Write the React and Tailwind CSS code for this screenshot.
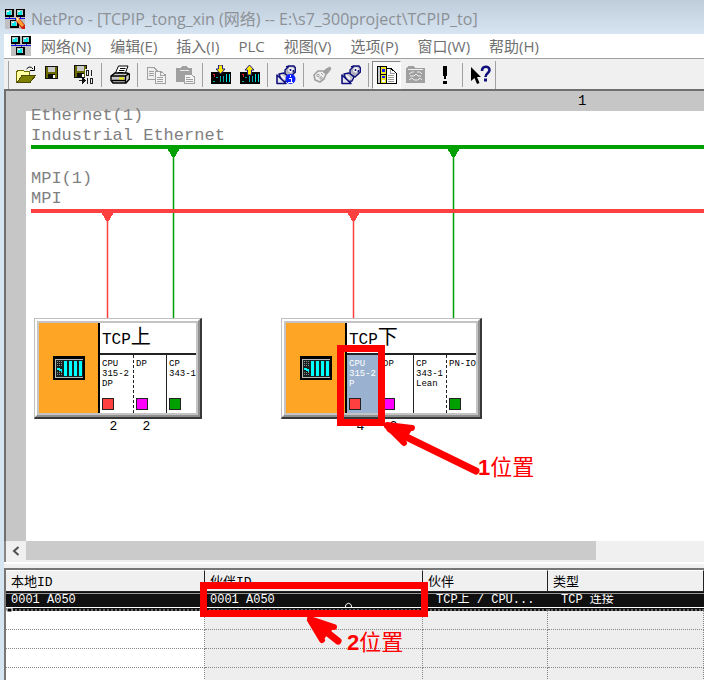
import React from 'react';
import clsx from 'clsx';

const MENUS = ['网络(N)', '编辑(E)', '插入(I)', 'PLC', '视图(V)', '选项(P)', '窗口(W)', '帮助(H)'];

const STATIONS = [
  {
    id: 'upper',
    name: 'TCP上',
    place: 'left-[28px] top-[227px]',
    slots: [
      { lines: ['CPU', '315-2', 'DP'], port: 'bg-[#ff4040]', address: '2' },
      { lines: ['DP'], port: 'bg-[#ff00ff]', dashed: true, address: '2' },
      { lines: ['CP', '343-1'], port: 'bg-[#00a000]' },
    ],
  },
  {
    id: 'lower',
    name: 'TCP下',
    place: 'left-[275px] top-[227px]',
    slots: [
      { lines: ['CPU', '315-2', 'P'], port: 'bg-[#ff4040]', address: '4', selected: true },
      { lines: ['DP'], port: 'bg-[#ff00ff]', dashed: true, address: '2' },
      { lines: ['CP', '343-1', 'Lean'] },
      { lines: ['PN-IO'], port: 'bg-[#00a000]', dashed: true },
    ],
  },
];

const Icon = ({ children, className = 'w-5 h-5' }) => (
  <svg viewBox="0 0 20 20" className={className} shapeRendering="crispEdges" aria-hidden="true">
    {children}
  </svg>
);

const Monitor = ({ x, y }) => (
  <g>
    <rect x={x} y={y} width="9" height="8" fill="#000" />
    <rect x={x + 1} y={y + 1} width="6" height="5" fill="#a8c8c8" />
    <rect x={x + 2} y={y + 2} width="4" height="4" fill="#00e5e5" />
    <rect x={x + 2} y={y + 2} width="2" height="1" fill="#fff" />
  </g>
);

const NetIcon = ({ pencil }) => (
  <Icon className="w-5 h-5 shrink-0">
    <rect width="20" height="20" fill="#c0c0c0" />
    <path d="M0 9.5H20M4.5 8V10M15.5 8V10M10 9V12" stroke="#1010e0" strokeWidth="1" fill="none" />
    <Monitor x={0} y={0} />
    <Monitor x={11} y={0} />
    <Monitor x={5} y={11} />
    {pencil && (
      <g shapeRendering="auto">
        <path d="M11 8L14 9L20 16V20H17L11 12Z" fill="#d02010" />
        <path d="M11 8L14 9.5L19 16L17 18L11.5 12Z" fill="#ffa030" />
        <path d="M11 8L14 9.5L12 12Z" fill="#fff3c0" />
      </g>
    )}
  </Icon>
);

const OpenIcon = () => (
  <Icon>
    <path d="M0.5 17.5V6.5L2.5 5.5H7.5L8.5 6.5H13.5V10" fill="#ffffa0" stroke="#6b6b00" />
    <path d="M1 17.5L6 10.5H19.5L14 17.5Z" fill="#808000" stroke="#4a4a00" />
    <path d="M10.5 4Q14 0 17 4M18.5 1V5.5H14" fill="none" stroke="#000" shapeRendering="auto" />
  </Icon>
);

const Disk = () => (
  <g>
    <rect x="0" y="0" width="13" height="13" fill="#111" />
    <rect x="1" y="1" width="11" height="11" fill="#6b6b00" />
    <rect x="3" y="1" width="7" height="5" fill="#c9c9c9" />
    <rect x="3" y="8" width="7" height="5" fill="#111" />
    <rect x="8" y="9" width="2" height="3" fill="#fff" />
  </g>
);

const SaveIcon = () => (
  <Icon>
    <g transform="translate(0 1)"><Disk /></g>
  </Icon>
);

const CompileIcon = () => (
  <Icon>
    <Disk />
    <rect x="11" y="4" width="9" height="9" fill="#f0f0f0" />
    <path d="M12.5 5.5H14.5V10.5H12.5ZM16.5 13.5H18.5V18.5H16.5Z" fill="none" stroke="#222" />
    <path d="M17.5 5V11M13.5 13V19M5 15.5H11" stroke="#222" fill="none" />
    <path d="M8 12L12 15.5L8 19Z" fill="#111" />
  </Icon>
);

const PrintIcon = () => (
  <Icon>
    <g shapeRendering="auto">
      <path d="M5 9L8.5 1H18L15 9Z" fill="#fff" stroke="#000" />
      <path d="M10 3.5H15.5M9 5.5H14.5M8 7.5H13.5" stroke="#000" />
      <path d="M1 11L5 8H17L19.5 9V14L16 18H3L1 15.5Z" fill="#c8c8c8" stroke="#000" strokeWidth="1.4" />
      <path d="M1 11H15.5L19 8.5M15.5 11V18M2 15.5H15.5" stroke="#000" strokeWidth="1.3" fill="none" />
      <rect x="9" y="12.5" width="5" height="2" fill="#e8e800" />
    </g>
  </Icon>
);

const CopyIcon = () => (
  <Icon>
    <path d="M1.5 2.5H8L11.5 6V14.5H1.5Z" fill="#eee" stroke="#a0a0a0" />
    <path d="M3 6.5H8M3 8.5H8M3 10.5H8" stroke="#a0a0a0" />
    <path d="M9.5 6.5H15L19.5 10V18.5H9.5Z" fill="#f4f4f4" stroke="#a0a0a0" />
    <path d="M14.5 6V10.5H19M11 12.5H17M11 14.5H17M11 16.5H17" stroke="#a0a0a0" fill="none" />
  </Icon>
);

const PasteIcon = () => (
  <Icon>
    <path d="M1 3H6L7 1H12L13 3H17V17H1Z" fill="#a0a0a0" />
    <path d="M5 5.5H14" stroke="#e8e8e8" />
    <path d="M9.5 9.5H16L19.5 12V18.5H9.5Z" fill="#f4f4f4" stroke="#a0a0a0" />
    <path d="M11 12.5H15M11 14.5H18M11 16.5H18" stroke="#a0a0a0" />
  </Icon>
);

const ModuleIcon = ({ up }) => (
  <Icon>
    <rect x="0" y="7" width="20" height="12" fill="#000" />
    <path d="M2 9.5H4M3.5 10V12" stroke="#d02020" fill="none" />
    <path d="M5 12.5H7M2 16.5H4" stroke="#00a0a0" />
    <path d="M9.5 11V17M12.5 11V17" stroke="#00a8a8" />
    <path d="M15.5 9V17M18.5 9V17" stroke="#00e0e0" />
    {up ? (
      <path d="M9.5 0L14 5H11.5V10H7.5V5H5Z" fill="#ffe800" stroke="#202080" shapeRendering="auto" />
    ) : (
      <path d="M7.5 0H11.5V4H14L9.5 9L5 4H7.5Z" fill="#ffe800" stroke="#202080" shapeRendering="auto" />
    )}
  </Icon>
);

const PlugShape = () => (
  <g shapeRendering="auto" stroke="#10107c" strokeLinejoin="round">
    <path d="M9 5L13 1H18L19.5 3V7L14 12L9 9Z" fill="#b0b0bc" strokeWidth="1.4" />
    <path d="M13 2.5H16.5L18 4L15 8L12 6Z" fill="#f4f4f8" stroke="none" />
    <path d="M14.5 4V6M17.5 5V7.5M10 2L13 1" strokeWidth="1.6" />
    <path d="M3 9L8 8L13 12L11 16L6 17Z" fill="#c4c4cc" strokeWidth="1.4" />
    <path d="M5 10L9 14" stroke="#fff" strokeWidth="1.6" />
    <path d="M1 10V18.5H10L1 10Z" fill="#e4e4ec" strokeWidth="1.6" />
  </g>
);

const PlugIcon = () => (
  <Icon><PlugShape /></Icon>
);

const PlugInfoIcon = () => (
  <Icon>
    <PlugShape />
    <circle cx="14.5" cy="14" r="5" fill="#0a1eff" shapeRendering="auto" />
    <path d="M14 10V12M13 13.5H15V17M12 17.5H17" stroke="#fff" strokeWidth="1" fill="none" />
  </Icon>
);

const CutPlugIcon = () => (
  <Icon>
    <g shapeRendering="auto" stroke="#a0a0a0" fill="#eee">
      <path d="M2 10L6 6H12L14 9L12 14L8 17L3 15Z" strokeWidth="1.6" />
      <path d="M11 7L14 4L18 2L19 4L15 9Z" fill="#a0a0a0" />
      <circle cx="6" cy="10.5" r="1.2" />
      <circle cx="9" cy="13" r="1.2" />
      <path d="M9 8L11 10" />
    </g>
  </Icon>
);

const CatalogIcon = () => (
  <Icon>
    <path d="M8.5 3.5H14L19 8V18.5H8.5Z" fill="#fff" stroke="#000" />
    <path d="M13.5 4V8.5H18M11 10.5H17M11 12.5H17M11 14.5H17M11 16.5H17" stroke="#999" fill="none" />
    <rect x="0.5" y="1.5" width="9" height="17" fill="#c8c8c8" stroke="#000" />
    <rect x="3.5" y="1.5" width="6" height="17" fill="#f0e428" stroke="#000" />
    <rect x="5" y="4" width="3" height="3" fill="#1a1aff" />
    <path d="M4 9.5H9" stroke="#000" />
    <rect x="5" y="11" width="3" height="2" fill="#1a1aff" />
    <rect x="5" y="15" width="3" height="2" fill="#fff" />
  </Icon>
);

const FolderNetIcon = () => (
  <Icon>
    <path d="M0 18V3L2 1H7L9 3H19V18Z" fill="#a0a0a0" />
    <path d="M2 4.5H17" stroke="#eee" />
    <path d="M3 9L6 7H8M11 7H14L16 9M4 11H8L10 9L12 11H15M3 15L6 13L8 15H12L14 13L16 15" stroke="#eee" fill="none" shapeRendering="auto" />
  </Icon>
);

const ExclaimIcon = () => (
  <Icon>
    <path d="M8 1H12V8L11 14H9L8 8Z" fill="#000" />
    <rect x="8" y="16" width="4" height="3" fill="#000" />
  </Icon>
);

const HelpIcon = () => (
  <Icon>
    <g shapeRendering="auto">
      <path d="M0 2V16L3.5 13L6 19L8.5 18L6 12H10Z" fill="#000" />
      <path d="M11 6C11 0.5 18.5 0.5 18.5 5C18.5 8.5 14.5 8 14.5 12" stroke="#10107c" strokeWidth="2.6" fill="none" />
      <rect x="13" y="13.5" width="3" height="3" fill="#10107c" />
    </g>
  </Icon>
);

const TOOL_GROUPS = [
  [
    { label: '打开', icon: <OpenIcon /> },
    { label: '保存', icon: <SaveIcon /> },
    { label: '保存并编译', icon: <CompileIcon /> },
  ],
  [{ label: '打印', icon: <PrintIcon /> }],
  [
    { label: '复制', icon: <CopyIcon />, disabled: true },
    { label: '粘贴', icon: <PasteIcon />, disabled: true },
  ],
  [
    { label: '下载', icon: <ModuleIcon /> },
    { label: '上传', icon: <ModuleIcon up /> },
  ],
  [{ label: '连接信息', icon: <PlugInfoIcon /> }],
  [
    { label: '断开连接', icon: <CutPlugIcon />, disabled: true },
    { label: '连接', icon: <PlugIcon /> },
  ],
  [
    { label: '目录', icon: <CatalogIcon />, pressed: true },
    { label: '项目', icon: <FolderNetIcon />, disabled: true },
    { label: '一致性检查', icon: <ExclaimIcon /> },
  ],
  [{ label: '帮助', icon: <HelpIcon /> }],
];

const Toolbar = () => (
  <div className="flex h-[31px] items-center border-t border-[#a0a0a0] bg-[#f0f0f0] pt-px pl-1">
    <span className="mr-0.5 h-7 w-px bg-[#a0a0a0]" />
    {TOOL_GROUPS.map((group, i) => (
      <div key={i} className="flex items-center">
        {i > 0 && <span className="mx-[3px] h-6 w-px bg-[#a0a0a0]" />}
        {group.map((tool) => (
          <button
            key={tool.label}
            type="button"
            aria-label={tool.label}
            disabled={tool.disabled}
            className={clsx(
              'flex h-7 w-[29px] items-center justify-center',
              tool.pressed && 'border border-t-[#888] border-l-[#888] border-r-white border-b-white bg-[#f8f8f8]'
            )}
          >
            {tool.icon}
          </button>
        ))}
      </div>
    ))}
    <span className="h-7 w-px bg-[#a0a0a0]" />
  </div>
);

const RackIcon = () => (
  <svg viewBox="0 0 32 24" className="h-6 w-8" shapeRendering="crispEdges" aria-hidden="true">
    <rect width="32" height="24" fill="#000" />
    <rect x="2" y="3" width="28" height="19" fill="#b8b8b8" />
    <rect x="3" y="4" width="27" height="17" fill="#182020" />
    <path d="M4 5.5H10M4 7.5H10M4 9.5H10M4 16.5H10M4 18.5H10" stroke="#8c9090" strokeDasharray="1 1" />
    <path d="M4 13H6L9 15" stroke="#00ffff" strokeWidth="2" fill="none" />
    <path d="M12.5 5V20M17.5 5V20M22.5 5V20M27.5 5V20" stroke="#00ffff" strokeWidth="3" />
  </svg>
);

const Station = ({ station }) => (
  <div className={clsx('absolute', station.place)}>
    <div className="border-t border-l border-r-2 border-b-2 border-t-[#c0c0c0] border-l-[#c0c0c0] border-r-[#383838] border-b-[#383838]">
      <div className="border-2 border-t-white border-l-white border-r-[#909090] border-b-[#909090]">
        <div className="flex h-[94px] border-2 border-[#c4c4c4] bg-white">
          <div className="flex w-[59px] items-center justify-center bg-[#ffa526]">
            <RackIcon />
          </div>
          <div className="flex flex-col border-l-2 border-black">
            <div className="flex h-[30px] items-baseline pt-1 pl-0.5 text-base leading-6 text-black">
              {station.name.slice(0, 3)}
              <span className="text-xl leading-6">{station.name.slice(3)}</span>
            </div>
            <div className="flex flex-1 border-t-2 border-[#222]">
              {station.slots.map((slot, i) => (
                <div
                  key={i}
                  className={clsx(
                    'flex w-[33px] flex-col justify-between pt-1 pb-[3px] pl-0.5 text-[9px] leading-[10px] last:w-[30px]',
                    i > 0 && 'border-l border-[#222]',
                    slot.dashed && 'border-dashed',
                    slot.selected ? 'bg-[#9ab2d0] text-white' : 'text-black'
                  )}
                >
                  <div>
                    {slot.lines.map((line) => (
                      <div key={line}>{line}</div>
                    ))}
                  </div>
                  {slot.port && <span className={clsx('h-3 w-3 border border-[#222]', slot.port)} />}
                </div>
              ))}
            </div>
          </div>
        </div>
      </div>
    </div>
    <div className="flex pl-[63px] text-[13px] leading-4 text-black">
      {station.slots.map((slot, i) => (
        <span key={i} className="w-[33px] text-center last:w-[30px]">{slot.address}</span>
      ))}
    </div>
  </div>
);

const BusLines = () => (
  <svg className="absolute inset-0 h-full w-full" shapeRendering="crispEdges" aria-hidden="true">
    <g fill="#00a000">
      <rect x="166" y="57" width="3" height="170" opacity="0.25" />
      <rect x="446" y="57" width="3" height="170" opacity="0.25" />
      <rect x="167" y="57" width="1" height="170" />
      <rect x="447" y="57" width="1" height="170" />
      <rect x="25" y="54" width="100%" height="4" />
      <path d="M161 57H174L167.5 68ZM441 57H454L447.5 68Z" />
    </g>
    <g fill="#ff4040">
      <rect x="100" y="121" width="3" height="106" opacity="0.25" />
      <rect x="346" y="121" width="3" height="106" opacity="0.25" />
      <rect x="101" y="121" width="1" height="106" />
      <rect x="347" y="121" width="1" height="106" />
      <rect x="25" y="118" width="100%" height="4" />
      <path d="M95 121H108L101.5 132ZM341 121H354L347.5 132Z" />
    </g>
  </svg>
);

const NetworkView = () => (
  <main className="relative flex flex-1 flex-col overflow-hidden border-t-2 border-l-2 border-[#707070] bg-[#c6c6c6] pl-5 font-['Liberation_Mono','Noto_Sans_CJK_SC',monospace]">
    <div className="h-5 pl-[552px] text-sm leading-5 text-black">1</div>
    <div className="flex-1 bg-white" />
    <BusLines />
    <div className="absolute top-[15px] left-[25px] text-[17px] leading-5 text-[#808080]">
      <div>Ethernet(1)</div>
      <div>Industrial Ethernet</div>
    </div>
    <div className="absolute top-[78px] left-[25px] text-[17px] leading-5 text-[#808080]">
      <div>MPI(1)</div>
      <div>MPI</div>
    </div>
    {STATIONS.map((station) => (
      <Station key={station.id} station={station} />
    ))}
    {/* 位置 1 标注 */}
    <svg className="absolute inset-0 h-full w-full" aria-hidden="true">
      <rect x="334.5" y="257.5" width="41" height="74" fill="none" stroke="#f00" strokeWidth="7" />
      <path d="M470 380L384 338" stroke="#f00" strokeWidth="7" strokeLinecap="round" />
      <path d="M379 332L407 337L398 352Z" fill="#f00" />
      <path d="M381 334L406 337M381 335L398 352" stroke="#f00" strokeWidth="6" strokeLinecap="round" />
    </svg>
    <span className="absolute top-[365px] left-[472px] font-['Liberation_Sans','Noto_Sans_CJK_SC',sans-serif] text-[22px] leading-6 text-[#f00]">
      <b>1</b>位置
    </span>
  </main>
);

const ScrollBar = () => (
  <div className="flex h-[21px] items-stretch border-l-2 border-[#888] bg-[#f0f0f0] pb-0.5">
    <button type="button" aria-label="向左滚动" className="flex w-5 items-center justify-center">
      <svg viewBox="0 0 10 10" className="h-2.5 w-2.5" aria-hidden="true">
        <path d="M7.5 1L3 5L7.5 9" fill="none" stroke="#505050" strokeWidth="2" />
      </svg>
    </button>
    <div className="flex-1">
      <div className="h-full w-[84%] bg-[#cbcbcb]" />
    </div>
  </div>
);

const HEADERS = ['本地ID', '伙伴ID', '伙伴', '类型'];
const CONNECTION = ['0001 A050', '0001 A050', 'TCP上 / CPU...', 'TCP 连接'];

const ConnectionTable = () => (
  <section className="relative h-28 overflow-hidden border-t-2 border-l-2 border-[#777] bg-[#eee] font-['Liberation_Mono','Noto_Sans_CJK_SC',monospace]">
    <table className="w-full table-fixed border-separate border-spacing-0 text-black">
      <colgroup>
        <col className="w-[199px]" />
        <col className="w-[218px]" />
        <col className="w-[125px]" />
        <col />
      </colgroup>
      <thead>
        <tr>
          {HEADERS.map((header) => (
            <th
              key={header}
              className="h-[22px] border-t border-r border-b border-t-white border-r-[#222] border-b-[#222] bg-[#f0f0f0] p-0 pt-1 pl-[5px] text-left text-[13px] leading-4 font-normal"
            >
              {header}
            </th>
          ))}
        </tr>
      </thead>
      <tbody>
        <tr className="bg-[#101010] text-white">
          {CONNECTION.map((text, i) => (
            <td key={i} className="h-[19px] p-0 pt-px">
              <div
                className={clsx(
                  'h-[15px] overflow-hidden border-t border-b border-t-[#999] border-b-white text-xs leading-[13px] whitespace-nowrap',
                  i < 2 ? 'pl-[5px]' : 'pl-[13px]'
                )}
              >
                {text}
              </div>
              <div className="mt-px h-0.5 border-t-2 border-dotted border-[#666]" />
            </td>
          ))}
        </tr>
        {[0, 1, 2, 3].map((row) => (
          <tr key={row}>
            {HEADERS.map((header, i) => (
              <td
                key={header}
                className={clsx(
                  'h-[19px] border-r border-b border-dotted border-[#888] p-0',
                  i === 0 ? 'bg-white' : 'bg-[#eee]'
                )}
              />
            ))}
          </tr>
        ))}
      </tbody>
    </table>
    {/* 位置 2 标注 */}
    <svg className="absolute inset-0 h-full w-full" aria-hidden="true">
      <rect x="1" y="38" width="5" height="4" fill="#000" stroke="#fff" />
      <path d="M340 38A3 3 0 1 1 345 38" fill="none" stroke="#fff" />
      <rect x="197.5" y="15.5" width="221" height="28" fill="none" stroke="#f00" strokeWidth="7" />
      <path d="M332 71L308 52" stroke="#f00" strokeWidth="7" strokeLinecap="round" />
      <path d="M301 47L329 57L316 71Z" fill="#f00" />
      <path d="M304 49L328 57M304 50L316 70" stroke="#f00" strokeWidth="6" strokeLinecap="round" />
    </svg>
    <span className="absolute top-[61px] left-[341px] font-['Liberation_Sans','Noto_Sans_CJK_SC',sans-serif] text-[22px] leading-6 text-[#f00]">
      <b>2</b>位置
    </span>
  </section>
);

const App = () => (
  <div className="flex min-h-screen flex-col overflow-hidden bg-[#d7e4f2] font-['Open_Sans','Noto_Sans_CJK_SC',sans-serif]">
    <header className="flex h-[34px] items-center gap-1.5 bg-linear-to-b from-[#bfccd9] to-[#d7e4f2] pt-1 pl-[5px] whitespace-nowrap">
      <NetIcon pencil />
      <h1 className="text-base text-[#8c9196]">
        NetPro - [TCPIP_tong_xin (网络) -- E:\s7_300project\TCPIP_to]
      </h1>
    </header>
    <div className="flex flex-1 flex-col pl-1">
      <nav className="flex h-6 items-center bg-white pl-[7px] whitespace-nowrap">
        <NetIcon />
        <div className="ml-2.5 flex gap-[19px]">
          {MENUS.map((menu) => (
            <button key={menu} type="button" className="text-[15px] leading-6 text-[#707070]">
              {menu}
            </button>
          ))}
        </div>
      </nav>
      <Toolbar />
      <NetworkView />
      <ScrollBar />
      <div className="h-1.5 border-t-2 border-white bg-[#f0f0f0]" />
      <ConnectionTable />
    </div>
  </div>
);

export default App;
